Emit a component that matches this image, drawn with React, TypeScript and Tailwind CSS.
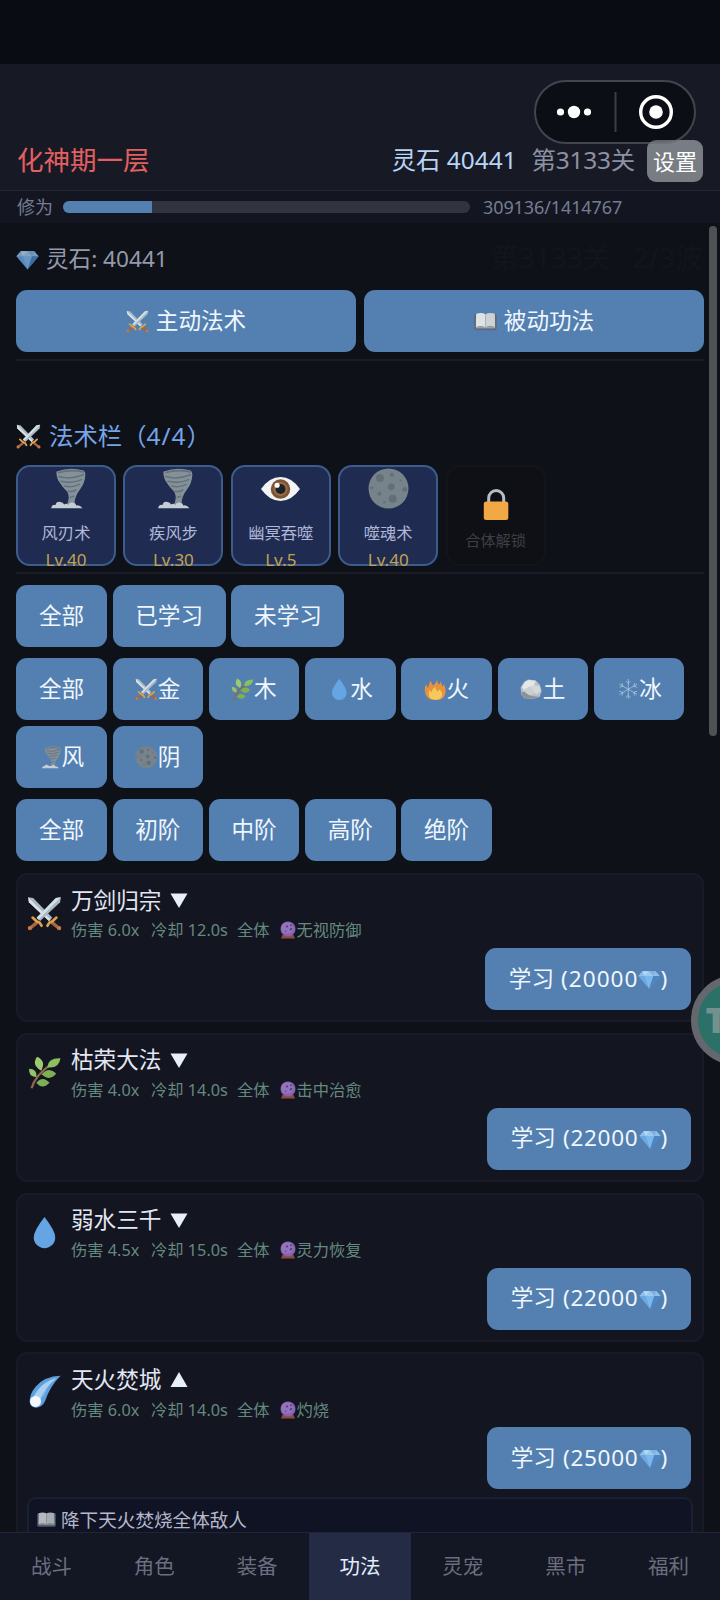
import type { ReactNode } from 'react';

type GlyphName =
  | 'gem' | 'swords' | 'book' | 'tornado' | 'eye' | 'moon'
  | 'herb' | 'drop' | 'fire' | 'rock' | 'snow' | 'orb' | 'comet';

const glyphs: Record<GlyphName, ReactNode> = {
  gem: (
    <>
      <path d="M5 3.500h14l4.600 5.200L12 22.500.4 8.700z" fill="#6aa9e6" />
      <path d="M5 3.500h14l4.600 5.200H.4z" fill="#8fbfe9" />
      <path d="M7.200 8.700h9.600L12 22.500z" fill="#7fb6ec" />
      <path d="M16.800 8.700h6.800L12 22.500z" fill="#4b86c2" />
      <path d="M5 3.500L7.200 8.700 12 3.500z" fill="#b7d8f2" />
      <path d="M12 3.500l4.800 5.200H7.200z" fill="#9cc9ef" />
      <path d="M12 3.500h7l-2.200 5.200z" fill="#7db2e2" />
    </>
  ),
  swords: (
    <>
      <path d="M.8.800l3.400.5L17.400 14.900l-2.400 2.300L1.300 4.200z" fill="#a9b9c2" />
      <path d="M.8.800l15.400 15.400-1.200 1L1.300 4.200z" fill="#dbe3e8" />
      <path d="M23.200.8l-3.400.5L6.600 14.900 9 17.200 22.700 4.200z" fill="#a9b9c2" />
      <path d="M23.200.8L7.800 16.200 6.600 14.900 19.800 1.300z" fill="#d5dfe4" />
      <path d="M6.200 17.200l1.800 1.600-4.800 3.800-1.700-1.600z" fill="#a9653f" />
      <path d="M17.800 17.200L16 18.800l4.800 3.800 1.700-1.600z" fill="#a9653f" />
      <path d="M3.800 14.800l2.600 2.400 2.200 1 1.400 2.200M20.200 14.800l-2.600 2.400-2.200 1-1.400 2.200" stroke="#dfa24a" strokeWidth="1.800" strokeLinecap="round" fill="none" />
      <circle cx="2" cy="22" r="1.500" fill="#c5764a" />
      <circle cx="22" cy="22" r="1.500" fill="#c5764a" />
    </>
  ),
  book: (
    <>
      <rect x=".3" y="4" width="23.400" height="17" rx="1.600" fill="#5d6b78" />
      <path d="M2 17.500h20v1.700H2z" fill="#98a3ac" />
      <path d="M2.200 4Q8 2 12 4.400V18Q7.500 16.200 2 17.800z" fill="#dfe3e6" />
      <path d="M21.800 4Q16 2 12 4.400V18q4.500-1.800 10-.2z" fill="#cdd2d6" />
      <path d="M12 4.400V18.400" stroke="#a3abb1" strokeWidth=".6" />
    </>
  ),
  tornado: (
    <>
      <path d="M6.200 2Q14-.8 22 1.400 23.200 2 23 4.500 22.800 8.500 20 12.500q-3.200 4-3.400 9l-5 1Q14.500 18 12.500 14 9 10.500 7 7 5.800 4 6.200 2z" fill="#84919a" />
      <path d="M7.500 2.600Q15 .6 21.800 2.400M7.500 5q7 2 14.500-1M8.800 7.800q6.500 1.600 12-1M11 10.600q4.500 1 8.500-1M13 13.600q3 .6 4.500-.8M14.200 17.200l2-.7" stroke="#65727a" strokeWidth=".9" fill="none" strokeLinecap="round" />
      <path d="M3 23.600q.4-2.300 2.600-2 .5-2.200 2.800-1.700 1.700.2 2.200 1.500 1.300-.9 2.300.2 1.500-2 3.300-1.200 1.400.5 1.500 1.500 2-.5 3.700 1.700z" fill="#c5ced4" />
    </>
  ),
  eye: (
    <>
      <path d="M.6 12.300Q5.500 5.300 12 5.300t11.400 7Q18.500 19.300 12 19.300T.6 12.300z" fill="#f1f3f4" />
      <circle cx="12" cy="12.300" r="5.700" fill="#7c5334" />
      <circle cx="12" cy="12.300" r="4.200" fill="#966b45" />
      <circle cx="12" cy="12.300" r="2.900" fill="#1b2228" />
      <circle cx="10" cy="10.100" r="1.500" fill="#fff" />
    </>
  ),
  moon: (
    <>
      <circle cx="12" cy="12" r="11.700" fill="#76838b" />
      <g fill="#626f77">
        <circle cx="7" cy="5.800" r="2.300" />
        <circle cx="13.600" cy="11" r="2" />
        <circle cx="14.500" cy="18" r="2.300" />
        <circle cx="14" cy="4" r="1.200" />
        <circle cx="21.500" cy="12.500" r="1.400" />
        <circle cx="6.700" cy="15" r="1.100" />
        <circle cx="2.300" cy="11.600" r=".8" />
        <circle cx="19" cy="7.300" r=".6" />
        <circle cx="9.500" cy="20" r=".7" />
      </g>
    </>
  ),
  herb: (
    <>
      <path d="M2.600 23.500Q5 14 17.500 5.500" stroke="#916651" strokeWidth="1.600" fill="none" />
      <path d="M14 8.200Q14.500 1.200 23.600 1.600 22.500 9.500 14 8.200z" fill="#8cbf5e" />
      <path d="M9.600 10.700Q2.200 6.500 6.600.6q6.800 3 3 10.100z" fill="#9bcb6c" />
      <path d="M9.800 13.300q5.500-6 10.700-.5-4.700 6-10.700.5z" fill="#7db052" />
      <path d="M6.200 15.200Q.4 15.500.8 9.300q6 .2 5.400 5.900z" fill="#93c565" />
      <path d="M6 19.700q4.500-5.800 9.700-.2-5 5.300-9.700.2z" fill="#7db052" />
    </>
  ),
  drop: <path d="M12 .8q7.800 10 7.800 14.800a7.800 7.800 0 01-15.600 0Q4.200 10.800 12 .8z" fill="#66a5e4" />,
  fire: (
    <>
      <path d="M14.500.2q-1.500 3.800 1.500 6.800 1.300-1 1.100-3.500 2.200 2 2.200 5.500 1.300-.5 1.500-2.500 2.300 3 2.200 8-.8 9-10.800 9Q2.500 23.500 1 14.500.4 9.500 2.600 6.500q.2 3 1.900 4.500.5-5.500 3-8 .3 3.500 2.500 5 3.300-3 4.500-7.800z" fill="#e9923a" />
      <path d="M12 9.500q.3 3 2.500 4.800 1.500-.8 1.500-2.300 3.800 2.500 3.300 6.500-1 4.500-7.300 4.500t-7-5.500q0-3 1-5 1 2.500 2.500 2.500 0-3.500 3.500-5.500z" fill="#f6c95c" />
    </>
  ),
  rock: (
    <>
      <path d="M4.500 4l4-2.300 8 .7 4.500 4.500 2 7-2 6-7 2.500-9-.8L1.500 18 .7 10z" fill="#b8bec2" />
      <path d="M5 4.500l4-2.300 7.500 1.100-1.500 4.500-6 2-4.500 3.700L2 9.500z" fill="#e4e7e9" />
      <path d="M15 7.500l6 1 1.200 5.500-4.500 3.500-5-3.400L9 10.500z" fill="#d3d8db" />
      <path d="M1.500 15.500l4-1 6.500 4.500 7.500.8-5 2.300-8.500-.6-4-3.500z" fill="#8a9196" />
      <path d="M5 11.500l5-2 5 3.500-1 4.500-4.500.8-4-3z" fill="#c9ced2" />
    </>
  ),
  snow: (
    <g stroke="#c0d5e8" strokeWidth=".7" fill="none" strokeLinecap="round">
      <path d="M12 1.500v21M2.900 6.700l18.200 10.600M21.100 6.700L2.900 17.300" strokeDasharray="2.500 1" />
      <path d="M9.800 3.500L12 5.700l2.200-2.200M9.800 20.500l2.200-2.200 2.200 2.200M3 9.700l3.200-.9L5.300 5.700M21 9.700l-3.200-.9.9-3.100M3 14.300l3.200.9-.9 3.100M21 14.300l-3.200.9.9 3.100" />
    </g>
  ),
  orb: (
    <>
      <path d="M4.500 18.500h15l1.800 4.700H2.700z" fill="#8d4b45" />
      <circle cx="12" cy="10.500" r="10" fill="#8562ae" />
      <circle cx="11" cy="9.500" r="8" fill="#9373ba" />
      <path d="M9 6.500l2.500-1 .5 2.500-2 1zM14.500 10l3-1-.5 2.800-2.500 1.200z" fill="#513a80" />
      <circle cx="16" cy="5.800" r="1.200" fill="#513a80" />
      <circle cx="9" cy="13.500" r="1" fill="#5d4389" />
    </>
  ),
  comet: (
    <>
      <path d="M23.700.5Q12 .8 5.500 8.500 1 14 1.200 19.500q.5 4.300 4.800 4.300 4.500-.3 6.500-5Q16 8 23.700.5z" fill="#5d9fdc" />
      <path d="M21 2Q12 4.500 7 11q-3.500 4.500-3.800 7.500 2 2.500 5 .5Q13 8.500 21 2z" fill="#a9d0f0" />
      <path d="M20 3Q12 9 9.500 17q2-1 3-4 2-6 7.500-10z" fill="#7fb6e8" />
      <circle cx="5.500" cy="19.200" r="4" fill="#f4f9fd" />
    </>
  ),
};

function Glyph({ name, className = '' }: { name: GlyphName; className?: string }) {
  return (
    <svg viewBox="0 0 24 24" className={`shrink-0 ${className}`}>
      {glyphs[name]}
    </svg>
  );
}

function Chip({ icon, children }: { icon?: GlyphName; children: ReactNode }) {
  return (
    <div className="flex h-[62px] items-center justify-center rounded-[11px] bg-[#5380b0] px-[22.650px] text-[22.600px] text-[#f0f6fd]">
      {icon && <Glyph name={icon} className="h-[22.600px] w-[22.600px]" />}
      <span>{children}</span>
    </div>
  );
}

const slots: { icon: GlyphName; name: string; level: number }[] = [
  { icon: 'tornado', name: '风刃术', level: 40 },
  { icon: 'tornado', name: '疾风步', level: 30 },
  { icon: 'eye', name: '幽冥吞噬', level: 5 },
  { icon: 'moon', name: '噬魂术', level: 40 },
];

const elements: { icon?: GlyphName; label: string }[] = [
  { label: '全部' },
  { icon: 'swords', label: '金' },
  { icon: 'herb', label: '木' },
  { icon: 'drop', label: '水' },
  { icon: 'fire', label: '火' },
  { icon: 'rock', label: '土' },
  { icon: 'snow', label: '冰' },
  { icon: 'tornado', label: '风' },
  { icon: 'moon', label: '阴' },
];

const skills: { icon: GlyphName; name: string; damage: string; cooldown: string; effect: string; price: number; detail?: string }[] = [
  { icon: 'swords', name: '万剑归宗', damage: '6.0x', cooldown: '12.0s', effect: '无视防御', price: 20000 },
  { icon: 'herb', name: '枯荣大法', damage: '4.0x', cooldown: '14.0s', effect: '击中治愈', price: 22000 },
  { icon: 'drop', name: '弱水三千', damage: '4.5x', cooldown: '15.0s', effect: '灵力恢复', price: 22000 },
  { icon: 'comet', name: '天火焚城', damage: '6.0x', cooldown: '14.0s', effect: '灼烧', price: 25000, detail: '降下天火焚烧全体敌人' },
];

const tabs = ['战斗', '角色', '装备', '功法', '灵宠', '黑市', '福利'];

function SkillCard({ skill }: { skill: (typeof skills)[number] }) {
  return (
    <div className={`shrink-0 rounded-[11px] border-2 border-[#181b27] bg-[#131521] ${skill.detail ? 'h-[260px]' : 'h-[149.500px]'}`}>
      <div className="flex pl-[9px]">
        <Glyph
          name={skill.icon}
          className={skill.icon === 'swords' ? 'mt-[21px] h-[35px] w-[35px]' : 'mx-[1px] mt-[21px] h-[33px] w-[33px]'}
        />
        <div className="ml-[9px] pt-[11px]">
          <div className="flex h-[30px] items-center text-[22.600px] text-[#e3e7f3]">
            <span>{skill.name}</span>
            <svg viewBox="0 0 18 16" className="ml-[9px] h-[16px] w-[18px]">
              <path d={skill.detail ? 'M9 0l8.500 15H.5z' : 'M.5 .5h17L9 15z'} fill="#e8eefa" />
            </svg>
          </div>
          <div className="flex h-[29px] items-center text-[16.300px] text-[#64897f]">
            <span className="w-[80px] whitespace-pre">伤害 {skill.damage}</span>
            <span className="w-[86px] whitespace-pre">冷却 {skill.cooldown}</span>
            <span className="w-[41.500px]">全体</span>
            <Glyph name="orb" className="h-[18px] w-[18px]" />
            <span>{skill.effect}</span>
          </div>
        </div>
      </div>
      <div className="mt-[3px] flex justify-end pr-[11px]">
        <div className={`flex h-[62px] items-center justify-center rounded-[11px] bg-[#5380b0] text-[22.600px] text-[#f0f6fd] ${skill.price === 20000 ? 'w-[206px]' : 'w-[204px]'}`}>
          <span>学习</span>
          <span className={`ml-[7px] ${skill.price === 20000 ? 'tracking-[1px]' : 'tracking-[.7px]'}`}>({skill.price}</span>
          <Glyph name="gem" className="h-[22px] w-[22px]" />
          <span>)</span>
        </div>
      </div>
      {skill.detail && (
        <div className="mx-[9px] mt-[8px] flex h-[120px] items-start rounded-[9px] border-2 border-[#1b1f34] bg-[#101324] pt-[8px] pl-[7.500px]">
          <Glyph name="book" className="mt-[3px] h-[19px] w-[19px] opacity-80" />
          <span className="ml-[5.500px] text-[18.600px] leading-[26px] text-[#b4b8cb]">{skill.detail}</span>
        </div>
      )}
    </div>
  );
}

export default function App() {
  return (
    <div className="relative flex h-[1600px] w-[720px] flex-col overflow-hidden bg-[#0e1118] font-['Noto_Sans','Noto_Sans_CJK_SC',sans-serif] leading-none">
      <div className="h-[64px] shrink-0 bg-[#0a0c13]" />

      <header className="flex h-[127px] shrink-0 items-end justify-between border-b border-[#252833] bg-[#171a25] pr-[17px] pb-[8px] pl-[17px]">
        <div className="flex h-[43px] items-center text-[26.500px] text-[#e45f60]">化神期一层</div>
        <div className="flex h-[43px] items-center text-[24.400px]">
          <span className="text-[#b9d4f6]">灵石 40441</span>
          <span className="ml-[15px] tracking-[-.2px] text-[#8d91a1]">第3133关</span>
          <span className="ml-[12px] flex h-[42px] w-[56px] items-center justify-center rounded-[9px] bg-[#787c83] text-[22px] text-white">
            设置
          </span>
        </div>
      </header>

      <div className="flex h-[32px] shrink-0 items-center bg-[#131621] pl-[17px] text-[18px] text-[#767c93]">
        <span className="w-[46px]">修为</span>
        <div className="h-[12px] w-[407px] overflow-hidden rounded-full bg-[#31343e]">
          <div className="h-full w-[89px] bg-[#5380b0]" />
        </div>
        <span className="ml-[13px] tracking-[-.1px]">309136/1414767</span>
      </div>

      <main className="flex min-h-0 flex-1 flex-col overflow-hidden pr-[16px] pl-[16px]">
        <div className="mt-[20px] flex h-[32px] shrink-0 items-center text-[22.600px] text-[#949aac]">
          <Glyph name="gem" className="h-[23px] w-[23px] opacity-80" />
          <span className="ml-[7px]">灵石: 40441</span>
        </div>

        <div className="mt-[15px] flex shrink-0 gap-[8px]">
          {(['主动法术', '被动功法'] as const).map((label, i) => (
            <div key={label} className="flex h-[62px] flex-1 items-center justify-center rounded-[11px] bg-[#5380b0] text-[22.600px] text-[#f0f6fd]">
              <Glyph name={i === 0 ? 'swords' : 'book'} className="mr-[7px] h-[23px] w-[23px]" />
              {label}
            </div>
          ))}
        </div>

        <div className="mt-[7px] h-[1.500px] shrink-0 bg-[#1a1d26]" />

        <div className="mt-[60px] flex h-[32px] shrink-0 items-center text-[24.400px] text-[#75a4e8]">
          <Glyph name="swords" className="h-[25px] w-[25px]" />
          <span className="ml-[8px]">法术栏（<span className="tracking-[1px]">4/4</span>）</span>
        </div>

        <div className="mt-[12.500px] flex shrink-0 gap-[7.400px]">
          {slots.map((slot, i) => (
            <div key={i} className="flex h-[101px] w-[100px] flex-col items-center rounded-[14px] border-2 border-[#3c5c8c] bg-[#1f2b50]">
              <Glyph name={slot.icon} className="mt-[1px] h-[41px] w-[41px]" />
              <span className="mt-[14px] text-[16.300px] leading-[20px] whitespace-nowrap text-[#b0b7d8]">{slot.name}</span>
              <span className="mt-[8px] text-[17px] leading-[18px] whitespace-nowrap text-[#c3a250]">Lv.{slot.level}</span>
            </div>
          ))}
          <div className="flex h-[101px] w-[100px] flex-col items-center rounded-[14px] border-2 border-[#13151b] bg-[#0f1015]">
            <svg viewBox="0 0 26 33" className="mt-[21px] h-[33px] w-[26px] shrink-0">
              <path d="M5.700 15V10a7.500 7.500 0 0115 0v5" stroke="#b4bec5" strokeWidth="3" fill="none" />
              <rect x=".8" y="13.500" width="24.500" height="18.500" rx="2.500" fill="#f2a845" />
            </svg>
            <span className="mt-[9px] text-[15.200px] leading-[20px] text-[#3d3f47]">合体解锁</span>
          </div>
        </div>

        <div className="mt-[6px] h-[1.500px] shrink-0 bg-[#1a1d28]" />

        <div className="mt-[11.500px] flex shrink-0 gap-[5.800px] pl-[.3px]">
          <Chip>全部</Chip>
          <Chip>已学习</Chip>
          <Chip>未学习</Chip>
        </div>
        <div className="mt-[11px] flex shrink-0 flex-wrap gap-x-[5.800px] gap-y-[6.300px] pl-[.3px]">
          {elements.map((el) => (
            <Chip key={el.label} icon={el.icon}>{el.label}</Chip>
          ))}
        </div>
        <div className="mt-[11px] flex shrink-0 gap-[5.800px] pl-[.3px]">
          {['全部', '初阶', '中阶', '高阶', '绝阶'].map((label) => (
            <Chip key={label}>{label}</Chip>
          ))}
        </div>

        <div className="mt-[11.500px] flex flex-col gap-[10.400px]">
          {skills.map((skill) => (
            <SkillCard key={skill.name} skill={skill} />
          ))}
        </div>
      </main>

      <nav className="grid h-[68px] shrink-0 grid-cols-7 border-t border-[#202435] bg-[#131623]">
        {tabs.map((tab) => (
          <div
            key={tab}
            className={`flex items-center justify-center text-[20.500px] ${tab === '功法' ? 'bg-[#242b45] text-[#e3ecfb]' : 'text-[#6a6e7e]'}`}
          >
            {tab}
          </div>
        ))}
      </nav>

      <div className="absolute top-[226px] left-[709px] h-[510px] w-[8px] rounded-full bg-[#4e5255]" />

      <div className="absolute top-[243px] right-[17px] text-[28px] whitespace-pre text-[#12151b]">第3133关   2/3波</div>

      <div className="absolute top-[80px] left-[534px] flex h-[64px] w-[162px] items-center rounded-full border-2 border-[#42454d] bg-[#0c0e15]">
        <svg viewBox="0 0 158 60" className="h-full w-full">
          <circle cx="24.500" cy="30" r="3.600" fill="#fff" />
          <circle cx="38" cy="30" r="6.200" fill="#fff" />
          <circle cx="51.500" cy="30" r="3.600" fill="#fff" />
          <path d="M79.500 10v40" stroke="#3b3e46" strokeWidth="2" />
          <circle cx="120" cy="30" r="15.300" stroke="#fff" strokeWidth="3.400" fill="none" />
          <circle cx="120" cy="30" r="6.800" fill="#fff" />
        </svg>
      </div>
      <div className="absolute top-[139.500px] left-[647px] h-[5px] w-[48px] overflow-hidden">
        <div className="h-[42px] w-[56px] rounded-[9px] bg-[#787c83]/80" />
      </div>

      <div className="absolute top-[975px] left-[690.500px] flex h-[90px] w-[90px] rounded-full border-[7px] border-[#65676e] bg-[#2b7168]">
        <span className="mt-[20px] ml-[8px] text-[36px] font-black text-[#73918e]">T</span>
      </div>
    </div>
  );
}
